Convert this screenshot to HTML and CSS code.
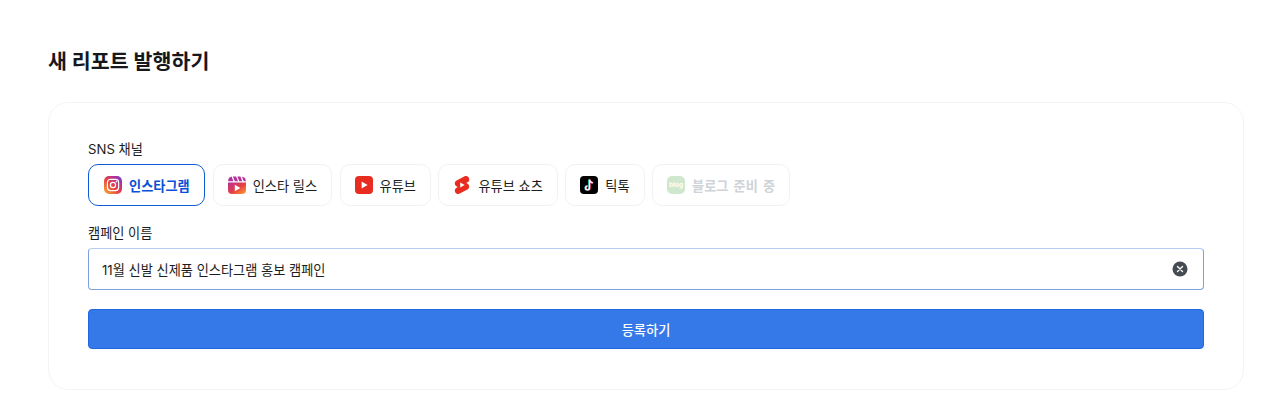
FILE: index.html
```html
<!doctype html>
<html lang="ko">
<head>
  <meta charset="utf-8" />
  <title>새 리포트 발행하기</title>
  <link rel="stylesheet" href="styles.css">
</head>
<body>
<div class="wrap">
  <h1>새 리포트 발행하기</h1>

  <div class="card">
    <div class="label">SNS 채널</div>
    <div class="channels">
      <button class="chip active">
        <svg class="ico" viewBox="0 0 18 18">
          <defs>
            <linearGradient id="ig" x1="0" y1="1" x2="1" y2="0">
              <stop offset="0" stop-color="#f9b233"/>
              <stop offset=".45" stop-color="#e8413f"/>
              <stop offset=".75" stop-color="#b5309a"/>
              <stop offset="1" stop-color="#5a4fcf"/>
            </linearGradient>
          </defs>
          <rect width="18" height="18" rx="5" fill="url(#ig)"/>
          <rect x="3.4" y="3.4" width="11.2" height="11.2" rx="3" fill="none" stroke="#fff" stroke-width="1.2"/>
          <circle cx="9" cy="9" r="2.6" fill="none" stroke="#fff" stroke-width="1.2"/>
          <circle cx="12.4" cy="5.6" r=".8" fill="#fff"/>
        </svg>
        인스타그램
      </button>
      <button class="chip">
        <svg class="ico" viewBox="0 0 18 18">
          <defs>
            <linearGradient id="reel" x1="0" y1="0" x2="1" y2="1">
              <stop offset="0" stop-color="#b5309a"/>
              <stop offset=".55" stop-color="#e8413f"/>
              <stop offset="1" stop-color="#f9a533"/>
            </linearGradient>
          </defs>
          <path d="M0 6.4h18V14a4 4 0 0 1-4 4H4a4 4 0 0 1-4-4z" fill="url(#reel)"/>
          <path d="M.2 5.2A4.5 4.5 0 0 1 3.6.6L5.4 5.2zM4.9.4h3.2L10 5.2H6.8zM9.4.4h3l1.9 4.8h-3zM13.9.7a4.4 4.4 0 0 1 3.9 4.5h-2z" fill="#b5309a"/>
          <path d="M6.8 8.8v6.4l5.6-3.2z" fill="#fff"/>
        </svg>
        인스타 릴스
      </button>
      <button class="chip">
        <svg class="ico" viewBox="0 0 18 18">
          <rect width="18" height="18" rx="4" fill="#e92c20"/>
          <path d="M6.6 5.4v7.2L12.6 9z" fill="#fff"/>
        </svg>
        유튜브
      </button>
      <button class="chip">
        <svg class="ico" viewBox="2 2 20 20">
          <path d="M10 14.65v-5.3L15 12l-5 2.65zm7.77-4.33c-.77-.32-1.2-.5-1.2-.5L18 9.06c1.84-.96 2.53-3.23 1.56-5.06s-3.24-2.53-5.07-1.56L6 6.94c-1.29.68-2.07 2.04-2 3.49.07 1.42.93 2.67 2.22 3.25.03.01 1.2.5 1.2.5L6 14.93c-1.83.97-2.53 3.24-1.56 5.07.97 1.83 3.24 2.53 5.07 1.56l8.5-4.5c1.29-.68 2.06-2.04 1.99-3.49-.07-1.42-.94-2.68-2.23-3.25z" fill="#e92c20"/>
        </svg>
        유튜브 쇼츠
      </button>
      <button class="chip">
        <svg class="ico" viewBox="0 0 18 18">
          <rect width="18" height="18" rx="4" fill="#000"/>
          <path d="M9.5 3.2v8.3a1.9 1.9 0 1 1-1.9-1.9M9.5 3.2c.2 1.9 1.4 3 3.3 3.2" fill="none" stroke="#25f4ee" stroke-width="1.5" transform="translate(-.5 .4)"/>
          <path d="M9.5 3.2v8.3a1.9 1.9 0 1 1-1.9-1.9M9.5 3.2c.2 1.9 1.4 3 3.3 3.2" fill="none" stroke="#fe2c55" stroke-width="1.5" transform="translate(.5 .4)"/>
          <path d="M9.5 3.2v8.3a1.9 1.9 0 1 1-1.9-1.9M9.5 3.2c.2 1.9 1.4 3 3.3 3.2" fill="none" stroke="#fff" stroke-width="1.2" transform="translate(0 .4)"/>
        </svg>
        틱톡
      </button>
      <button class="chip off">
        <span class="blog">blog</span>
        블로그 준비 중
      </button>
    </div>

    <div class="label second">캠페인 이름</div>
    <div class="field">
      <span class="value">11월 신발 신제품 인스타그램 홍보 캠페인</span>
      <svg class="clear" viewBox="0 0 16 16">
        <circle cx="8" cy="8" r="7.5" fill="#464b53"/>
        <path d="M5.5 5.5l5 5M10.5 5.5l-5 5" stroke="#fff" stroke-width="1.4" stroke-linecap="round"/>
      </svg>
    </div>

    <button class="submit">등록하기</button>
  </div>
</div>
</body>
</html>
```

FILE: styles.css
```css
*{box-sizing:border-box}
body{
  margin:0;
  background:#fff;
  color:#111;
  font-family:"Inter","Noto Sans CJK KR",sans-serif;
}

.wrap{padding:44px 36px 0 48px}
h1{
  margin:0 0 23px;
  font-size:20.6px;
  line-height:35px;
  font-weight:700;
  color:#16181c;
}

.card{
  height:288px;
  padding:36px 39px 0;
  border:1px solid #f3f4f6;
  border-radius:20px;
  background:#fff;
}

.label{
  font-size:13.2px;
  line-height:20px;
  color:#1b1d21;
}
.second{margin-top:17px}

.channels{
  display:flex;
  gap:7.5px;
  margin-top:5px;
}
.chip{
  display:flex;
  align-items:center;
  gap:7px;
  height:42px;
  padding:0 14px;
  border:1px solid #f1f2f4;
  border-radius:10px;
  background:#fff;
  color:#1b1d21;
  font-family:inherit;
  font-size:13.2px;
  font-weight:400;
}
.chip.active{
  padding:0 14.5px 0 15px;
  border-color:#0f5bd6;
  color:#0a4fd6;
  font-weight:700;
}
.chip.off{
  color:#cfd3d8;
  font-weight:700;
  word-spacing:2px;
}
.ico{width:18px;height:18px;flex:none}
.blog{
  display:flex;
  align-items:center;
  justify-content:center;
  width:18px;
  height:18px;
  border-radius:5px;
  background:#cfe8cd;
  color:#fff;
  font-size:6.5px;
  font-weight:700;
}

.field{
  display:flex;
  align-items:center;
  justify-content:space-between;
  height:42px;
  margin-top:5px;
  padding:0 15px 0 13px;
  border:1px solid #7f9fe0;
  border-top-color:#b5cdf3;
  border-radius:4px;
  font-size:13.2px;
  color:#1b1d21;
}
.clear{width:16px;height:16px}

.submit{
  display:block;
  width:100%;
  height:40px;
  margin-top:19px;
  border:1px solid #1f68e0;
  border-radius:4px;
  background:#3578e8;
  color:#fff;
  font-family:inherit;
  font-size:13.2px;
  font-weight:500;
}
```
